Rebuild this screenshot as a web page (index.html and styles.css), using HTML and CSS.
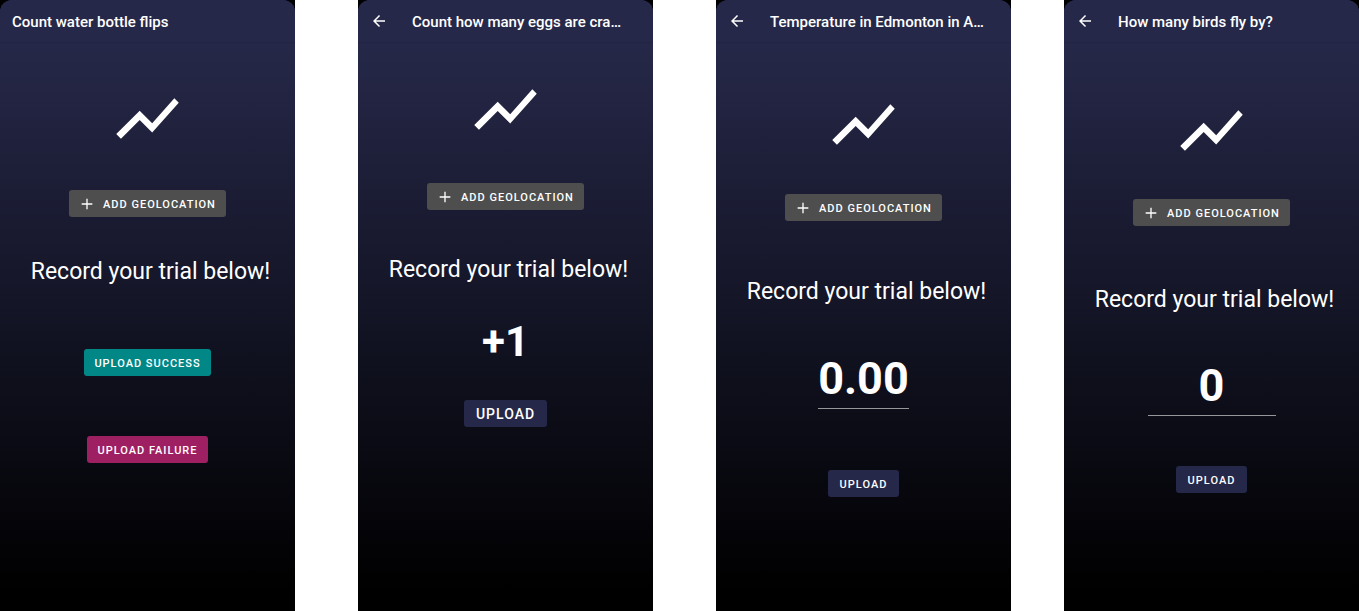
FILE: index.html
```html
<!DOCTYPE html>
<html lang="en">
<head>
<meta charset="utf-8">
<meta name="viewport" content="width=device-width, initial-scale=1">
<title>Record trials</title>
<link rel="stylesheet" href="styles.css">
</head>
<body>
<svg width="0" height="0" class="sprite" aria-hidden="true">
  <symbol id="trend" viewBox="0 0 24 24"><path d="M3.5 18.49l6-6.01 4 4L22 6.92l-1.41-1.41-7.09 7.97-4-4L2 16.99z"/></symbol>
  <symbol id="plus" viewBox="0 0 24 24"><path d="M20 13h-7v7h-2v-7H4v-2h7V4h2v7h7v2z"/></symbol>
  <symbol id="back" viewBox="0 0 24 24"><path d="M20 11H7.83l5.59-5.59L12 4l-8 8 8 8 1.41-1.41L7.83 13H20v-2z"/></symbol>
</svg>
<main class="screens">
  <section class="screen">
    <div class="surface">
      <header class="bar"><h1 class="title">Count water bottle flips</h1></header>
      <div class="content binomial">
        <svg class="trend"><use href="#trend"/></svg>
        <button class="btn geo" type="button"><svg class="plus"><use href="#plus"/></svg>Add geolocation</button>
        <p class="prompt">Record your trial below!</p>
        <button class="btn success" type="button">Upload success</button>
        <button class="btn failure" type="button">Upload failure</button>
      </div>
    </div>
  </section>
  <section class="screen">
    <div class="surface">
      <header class="bar">
        <button class="back" type="button" aria-label="Back"><svg><use href="#back"/></svg></button>
        <h1 class="title">Count how many eggs are cra…</h1>
      </header>
      <div class="content count">
        <svg class="trend"><use href="#trend"/></svg>
        <button class="btn geo" type="button"><svg class="plus"><use href="#plus"/></svg>Add geolocation</button>
        <p class="prompt">Record your trial below!</p>
        <p class="increment">+1</p>
        <button class="btn upload large" type="button">Upload</button>
      </div>
    </div>
  </section>
  <section class="screen">
    <div class="surface">
      <header class="bar">
        <button class="back" type="button" aria-label="Back"><svg><use href="#back"/></svg></button>
        <h1 class="title">Temperature in Edmonton in A…</h1>
      </header>
      <div class="content measurement">
        <svg class="trend"><use href="#trend"/></svg>
        <button class="btn geo" type="button"><svg class="plus"><use href="#plus"/></svg>Add geolocation</button>
        <p class="prompt">Record your trial below!</p>
        <input class="value" type="text" inputmode="decimal" aria-label="Measurement" value="0.00">
        <button class="btn upload" type="button">Upload</button>
      </div>
    </div>
  </section>
  <section class="screen">
    <div class="surface">
      <header class="bar">
        <button class="back" type="button" aria-label="Back"><svg><use href="#back"/></svg></button>
        <h1 class="title">How many birds fly by?</h1>
      </header>
      <div class="content integer">
        <svg class="trend"><use href="#trend"/></svg>
        <button class="btn geo" type="button"><svg class="plus"><use href="#plus"/></svg>Add geolocation</button>
        <p class="prompt">Record your trial below!</p>
        <input class="value" type="text" inputmode="numeric" aria-label="Count" value="0">
        <button class="btn upload" type="button">Upload</button>
      </div>
    </div>
  </section>
</main>
</body>
</html>
```
FILE: styles.css
```css
* { box-sizing: border-box; }
body { margin: 0; background: #fff; color: #fff; font-family: Roboto, "Liberation Sans", sans-serif; }
h1, p { margin: 0; }
button, input { font-family: inherit; color: inherit; }
svg { fill: currentColor; display: block; flex: none; }
.sprite { position: absolute; }

.screens { display: flex; min-height: 100vh; }
.screen { flex: 1 1 0; min-width: 0; display: flex; background: #000; }
.screen + .screen { margin-left: 63px; }
.screen + .screen:last-child { margin-left: 53px; }
.surface {
  flex: 1;
  min-width: 0;
  display: flex;
  flex-direction: column;
  border-radius: 12px 12px 0 0;
  overflow: hidden;
  background: linear-gradient(#262849 42px, #000 97%);
}

.bar { display: flex; align-items: center; height: 42px; padding: 0 12px; background: #262849; box-shadow: 0 1px 1px rgba(0, 0, 0, 0.08); }
.title { font-size: 15px; line-height: 20px; font-weight: 500; white-space: nowrap; padding-top: 2px; }
.back { display: flex; width: 18px; margin-right: 24px; padding: 0; border: 0; background: none; }
.back svg { width: 18px; height: 18px; }

.content { display: flex; flex-direction: column; align-items: center; }
.trend { width: 75px; height: 75px; }
.btn {
  display: flex;
  align-items: center;
  height: 27px;
  padding: 1px 10px 0;
  border: 0;
  border-radius: 3px;
  font-size: 11px;
  font-weight: 500;
  letter-spacing: 1px;
  text-transform: uppercase;
  white-space: nowrap;
}
.geo { background: #4e4e4e; }
.plus { width: 16px; height: 16px; margin-right: 8px; }
.success { background: #018786; }
.failure { background: #9f1f63; }
.upload { background: #262849; padding: 1px 12px 0; }
.large { font-size: 14px; padding-top: 0; }
.prompt { font-size: 23px; line-height: 28px; padding-left: 6px; white-space: nowrap; }
.increment { font-size: 42px; line-height: 50px; font-weight: 700; }
.value {
  height: 60px;
  padding: 0;
  border: 0;
  border-bottom: 1px solid #97979b;
  background: none;
  font-size: 45px;
  font-weight: 700;
  text-align: center;
}

.binomial { padding-top: 39px; }
.binomial .geo { margin-top: 34px; }
.binomial .prompt { margin-top: 41px; }
.binomial .success { margin-top: 63px; }
.binomial .failure { margin-top: 60px; }

.count { padding-top: 30px; }
.count .geo { margin-top: 36px; }
.count .prompt { margin-top: 46px; }
.count .increment { margin-top: 33px; }
.count .upload { margin-top: 33px; }

.measurement { padding-top: 45px; }
.measurement .geo { margin-top: 32px; }
.measurement .prompt { margin-top: 57px; }
.measurement .value { margin-top: 43px; width: 91px; }
.measurement .upload { margin-top: 61px; }

.integer { padding-top: 51px; }
.integer .geo { margin-top: 31px; }
.integer .prompt { margin-top: 60px; }
.integer .value { margin-top: 42px; width: 128px; }
.integer .upload { margin-top: 50px; }
```
